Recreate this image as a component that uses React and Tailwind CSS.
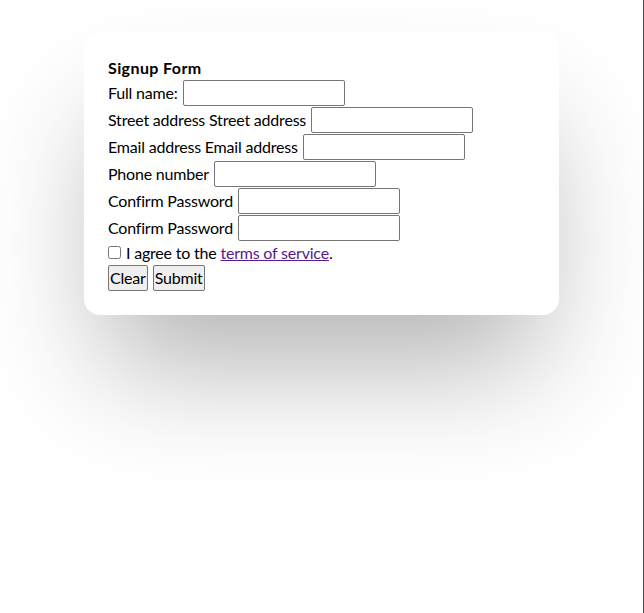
import React from "react";

function Row({ label }) {
  return (
    <div className="flex h-[27px] items-center">
      <span>{label}</span>
      <input
        type="text"
        className="ml-[5px] h-[26px] w-[162px] rounded-[2px] border border-[#767676] bg-white px-[2px]"
      />
    </div>
  );
}

export default function App() {
  return (
    <div className="flex min-h-[613px] w-full bg-white">
      <div className="flex flex-1 justify-center pt-[32px]">
        <div className="h-[283px] w-[475px] rounded-[16px] bg-white p-6 text-[16px] tracking-[-0.2px] text-black shadow-[0_70px_120px_-20px_rgba(0,0,0,0.3)] font-['Lato',sans-serif]">
          <div className="h-[23px] font-bold leading-[23px] tracking-[0.4px]">Signup Form</div>
          <Row label="Full name:" />
          <Row label="Street address Street address" />
          <Row label="Email address Email address" />
          <Row label="Phone number" />
          <Row label="Confirm Password" />
          <Row label="Confirm Password" />
          <div className="flex h-[23px] items-center">
            <input type="checkbox" className="h-[13px] w-[13px]" />
            <span className="ml-[5px]">
              I agree to the{" "}
              <a href="#" className="text-[#551a8b] underline">
                terms of service
              </a>
              .
            </span>
          </div>
          <div className="flex h-[27px] items-center gap-[5px]">
            <button className="h-[26px] rounded-[2px] border border-[#767676] bg-[#efefef] px-px">
              Clear
            </button>
            <button className="h-[26px] rounded-[2px] border border-[#767676] bg-[#efefef] px-px">
              Submit
            </button>
          </div>
        </div>
      </div>
      <div className="w-px bg-[#4a4a4a]" />
    </div>
  );
}
